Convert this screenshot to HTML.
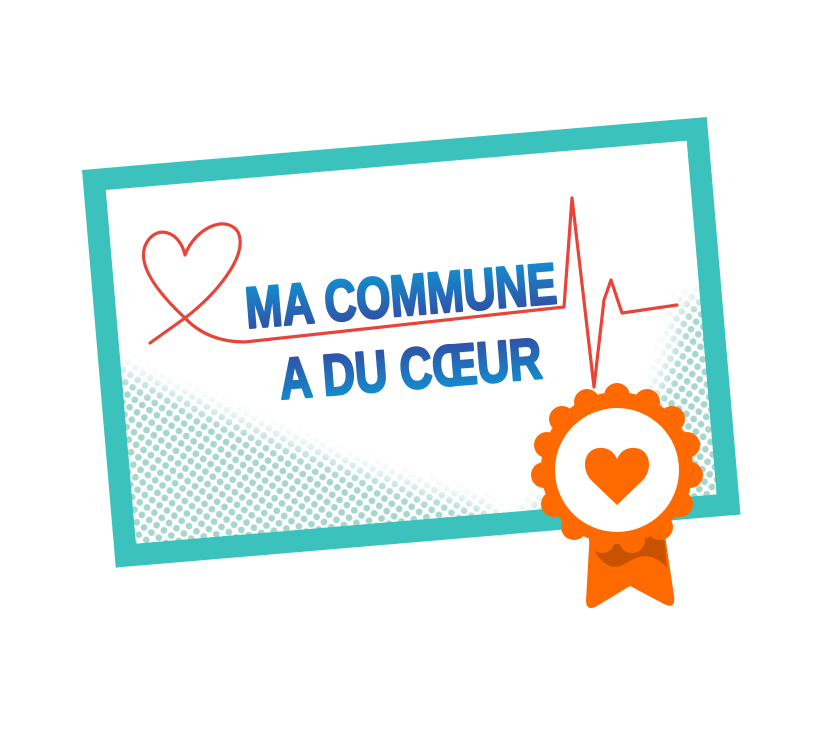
<!DOCTYPE html>
<html><head><meta charset="utf-8"><style>
html,body{margin:0;padding:0;background:#fff;width:820px;height:740px;overflow:hidden}
svg{display:block}
</style></head><body>
<svg width="820" height="740" viewBox="0 0 820 740" xmlns="http://www.w3.org/2000/svg">
<defs>
  <pattern id="dots" width="9" height="9" patternUnits="userSpaceOnUse" patternTransform="rotate(40)">
    <rect width="9" height="9" fill="#fff"/>
    <circle cx="4.5" cy="4.5" r="3.4" fill="#a6d6cc"/>
  </pattern>
  <filter id="blur" x="-20%" y="-20%" width="140%" height="140%"><feGaussianBlur stdDeviation="10"/></filter>
  <linearGradient id="blue" x1="0" y1="0" x2="0" y2="1">
    <stop offset="0" stop-color="#36459e"/>
    <stop offset="1" stop-color="#0e98d6"/>
  </linearGradient>
  <linearGradient id="blue2" x1="0" y1="0" x2="0" y2="1">
    <stop offset="0" stop-color="#0e98d6"/>
    <stop offset="1" stop-color="#36459e"/>
  </linearGradient>
  <clipPath id="inner"><rect x="22" y="22" width="583" height="355"/></clipPath>
</defs>

<g transform="translate(82,170) rotate(-4.85)">
  <rect x="0" y="0" width="627" height="399" fill="#3bc2bd"/>
  <g clip-path="url(#inner)">
    <rect x="22" y="22" width="583" height="355" fill="url(#dots)"/>
    <path d="M-20,-20 L660,-20 L660,170 L585,185 C565,290 500,350 420,375 L400,400 L370,370 C250,330 120,260 -20,180 Z" fill="#fff" filter="url(#blur)"/>
  </g>
</g>

<path d="M150,343 L185,318 C155,290 135,262 147,242 C158,224 180,232 185,255 C195,228 226,214 238,232 C249,256 215,295 185,318 C200,334 220,342 245,342 L564,307 L572,198 L594,387 L604,300 L611,280 L622,313 L677,305"
 fill="none" stroke="#e8443a" stroke-width="3.2" stroke-linejoin="round" stroke-linecap="round"/>

<g font-family="'Liberation Sans',sans-serif" font-weight="bold" stroke-width="2.5" stroke-linejoin="round">
  <text transform="translate(247,328) rotate(-4.6)" font-size="58" textLength="312" lengthAdjust="spacingAndGlyphs" fill="url(#blue2)" stroke="url(#blue2)">MA COMMUNE</text>
  <text transform="translate(281,399) rotate(-4.6)" font-size="58" textLength="263" lengthAdjust="spacingAndGlyphs" fill="url(#blue)" stroke="url(#blue)">A DU CŒUR</text>
</g>

<path d="M590,530 L586,600 Q586,612 597,606 L630,586 L664,604 Q676,610 674,596 L664,528 Z" fill="#ff6a00"/>
<path d="M589,540 Q605,578 628,562 Q650,548 667,568 L664,535 L590,530 Z" fill="#c85200"/>
<g fill="#ff6a00">
  <circle cx="617" cy="468" r="76"/>
  <circle cx="617" cy="396" r="13"/>
  <circle cx="647" cy="402" r="13"/>
  <circle cx="672" cy="419" r="13"/>
  <circle cx="687" cy="445" r="13"/>
  <circle cx="690" cy="475" r="13"/>
  <circle cx="680" cy="504" r="13"/>
  <circle cx="660" cy="527" r="13"/>
  <circle cx="632" cy="540" r="13"/>
  <circle cx="602" cy="540" r="13"/>
  <circle cx="574" cy="527" r="13"/>
  <circle cx="554" cy="504" r="13"/>
  <circle cx="544" cy="475" r="13"/>
  <circle cx="547" cy="445" r="13"/>
  <circle cx="562" cy="419" r="13"/>
  <circle cx="587" cy="402" r="13"/>
</g>
<circle cx="617" cy="470" r="62" fill="#fff"/>
<path d="M617,505 L592,481 C580,469 584,449 599,448 C608,447 614,452 617,459 C620,452 626,447 635,448 C650,449 654,469 642,481 Z" fill="#ff6a00"/>
</svg>
</body></html>
